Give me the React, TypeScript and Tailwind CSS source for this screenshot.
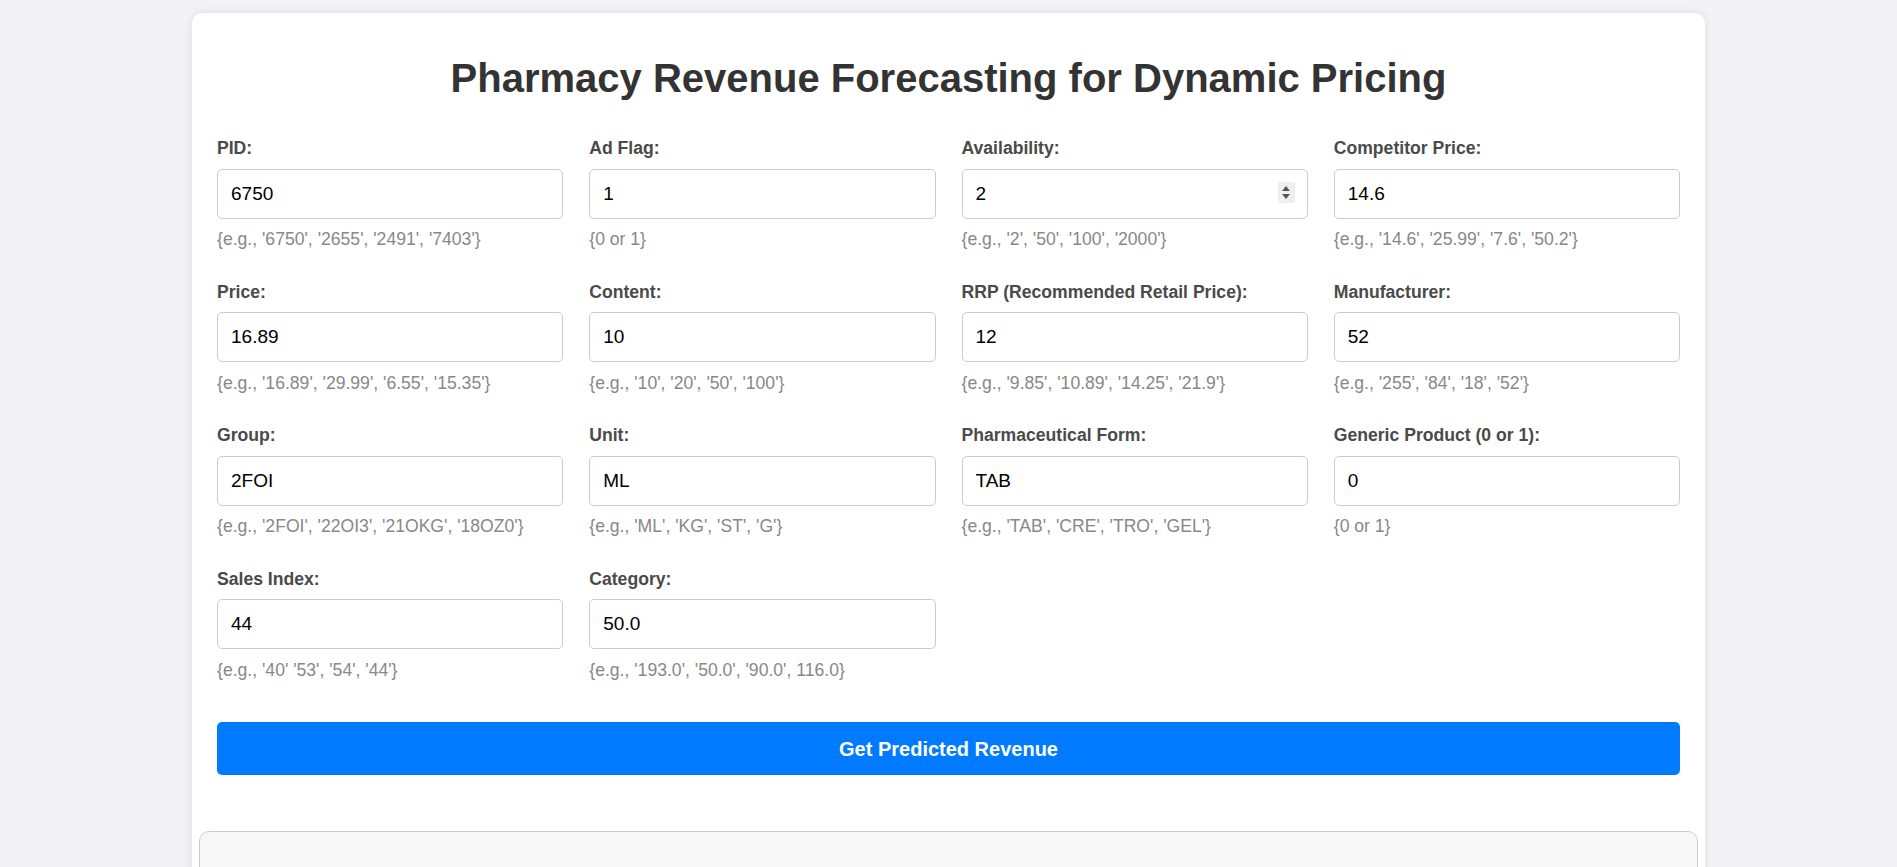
import React from 'react';

const fields = [
  { label: 'PID:', value: '6750', hint: "{e.g., '6750', '2655', '2491', '7403'}" },
  { label: 'Ad Flag:', value: '1', hint: '{0 or 1}' },
  { label: 'Availability:', value: '2', hint: "{e.g., '2', '50', '100', '2000'}", spinner: true },
  { label: 'Competitor Price:', value: '14.6', hint: "{e.g., '14.6', '25.99', '7.6', '50.2'}" },
  { label: 'Price:', value: '16.89', hint: "{e.g., '16.89', '29.99', '6.55', '15.35'}" },
  { label: 'Content:', value: '10', hint: "{e.g., '10', '20', '50', '100'}" },
  { label: 'RRP (Recommended Retail Price):', value: '12', hint: "{e.g., '9.85', '10.89', '14.25', '21.9'}" },
  { label: 'Manufacturer:', value: '52', hint: "{e.g., '255', '84', '18', '52'}" },
  { label: 'Group:', value: '2FOI', hint: "{e.g., '2FOI', '22OI3', '21OKG', '18OZ0'}" },
  { label: 'Unit:', value: 'ML', hint: "{e.g., 'ML', 'KG', 'ST', 'G'}" },
  { label: 'Pharmaceutical Form:', value: 'TAB', hint: "{e.g., 'TAB', 'CRE', 'TRO', 'GEL'}" },
  { label: 'Generic Product (0 or 1):', value: '0', hint: '{0 or 1}' },
  { label: 'Sales Index:', value: '44', hint: "{e.g., '40' '53', '54', '44'}" },
  { label: 'Category:', value: '50.0', hint: "{e.g., '193.0', '50.0', '90.0', 116.0}" },
];

const Spinner: React.FC = () => (
  <div className="absolute right-[13px] top-[13px] flex h-[21px] w-[17px] flex-col items-center justify-center gap-[3px] bg-[#efefef]">
    <svg width="8" height="5" viewBox="0 0 8 5">
      <path d="M4 0 L8 5 L0 5 Z" fill="#555" />
    </svg>
    <svg width="8" height="5" viewBox="0 0 8 5">
      <path d="M0 0 L8 0 L4 5 Z" fill="#555" />
    </svg>
  </div>
);

const App: React.FC = () => {
  return (
    <div className="min-h-screen bg-[#f2f2f7] pt-[13px] font-['Liberation_Sans',Arial,sans-serif]">
      <div className="mx-auto w-[1513px] rounded-[10px] bg-white px-[7px] pt-[42px] pb-[20px] shadow-[0_0_10px_rgba(0,0,0,0.1)]">
        <div className="px-[18px]">
          <h1 className="text-center text-[40px] font-bold leading-[46px] text-[#333]">
            Pharmacy Revenue Forecasting for Dynamic Pricing
          </h1>

          <form className="mt-[38px] grid grid-cols-4 gap-x-[26px] gap-y-[33px]" onSubmit={(e) => e.preventDefault()}>
            {fields.map((f) => (
              <div key={f.label} className="flex flex-col">
                <label className="text-[17.6px] font-bold leading-[19.5px] text-[#4a4a4a]">{f.label}</label>
                <div className="relative mt-[10px]">
                  <input
                    type="text"
                    defaultValue={f.value}
                    className="h-[50px] w-full rounded-[5px] border border-[#ccc] bg-white px-[13px] text-[19px] text-black outline-none"
                  />
                  {f.spinner && <Spinner />}
                </div>
                <small className="mt-[11.5px] text-[17.6px] leading-[19.5px] text-[#888]">{f.hint}</small>
              </div>
            ))}
          </form>

          <button className="mt-[42px] h-[53px] w-full rounded-[5px] bg-[#007bff] text-[20px] font-bold text-white">
            Get Predicted Revenue
          </button>
        </div>

        <div className="mt-[56px] h-[140px] rounded-[10px] border border-[#ccc] bg-[#f8f8f8]" />
      </div>
    </div>
  );
};

export default App;
